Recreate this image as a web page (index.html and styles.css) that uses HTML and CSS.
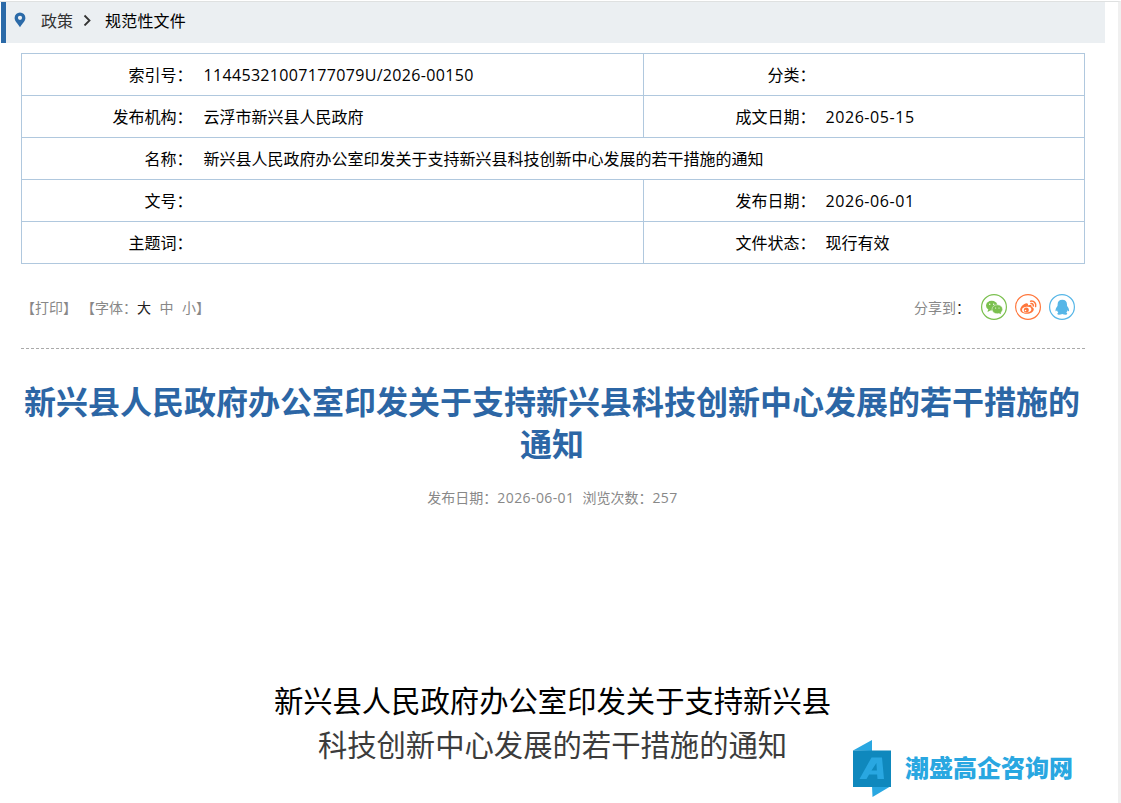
FILE: index.html
```html
<!DOCTYPE html>
<html lang="zh-CN">
<head>
    <meta charset="utf-8">
    <title>新兴县人民政府办公室印发关于支持新兴县科技创新中心发展的若干措施的通知</title>
    <link rel="stylesheet" href="styles.css">
</head>
<body>
    <div class="page">
        <div class="crumb">
            <svg class="pin" viewBox="0 0 12 16" width="12" height="16">
                <path fill="#2b6aa8" fill-rule="evenodd" d="M6 0.5a5.4 5.4 0 0 1 5.4 5.4C11.4 9 8.6 11 6 15.2 3.4 11 .6 9 .6 5.9A5.4 5.4 0 0 1 6 .5zM6 3.7a2.1 2.1 0 1 0 0 4.2 2.1 2.1 0 0 0 0-4.2z"/>
            </svg>
            <a class="crumb-link">政策</a>
            <svg class="arrow" viewBox="0 0 8 12" width="8" height="12">
                <path fill="none" stroke="#333" stroke-width="1.8" d="M1.500 1.500L6.500 6.500l-5 5"/>
            </svg>
            <a class="crumb-now">规范性文件</a>
        </div>

        <table class="info">
            <tr>
                <th class="c1">索引号：</th><td class="c2 serial">11445321007177079U/2026-00150</td>
                <th class="c3">分类：</th><td></td>
            </tr>
            <tr>
                <th>发布机构：</th><td class="c2">云浮市新兴县人民政府</td>
                <th>成文日期：</th><td class="date">2026-05-15</td>
            </tr>
            <tr>
                <th>名称：</th><td class="name" colspan="3">新兴县人民政府办公室印发关于支持新兴县科技创新中心发展的若干措施的通知</td>
            </tr>
            <tr>
                <th>文号：</th><td class="c2"></td>
                <th>发布日期：</th><td class="date">2026-06-01</td>
            </tr>
            <tr>
                <th>主题词：</th><td class="c2"></td>
                <th>文件状态：</th><td>现行有效</td>
            </tr>
        </table>

        <div class="tools">
            <span class="print">【打印】</span>
            <span>【字体：</span><a class="size on">大</a><a class="size">中</a><a>小</a><span>】</span>
            <div class="share">
                <span>分享到<b>：</b></span>
                <svg class="icon" viewBox="0 0 26 26">
                    <circle cx="13" cy="13" r="12.400" fill="#fff" stroke="#7bc04f" stroke-width="1.200"/>
                    <ellipse cx="10.700" cy="11.600" rx="5.700" ry="4.900" fill="#7bc04f"/>
                    <path fill="#7bc04f" d="M7.300 15l-.8 3 3.400-1.700z"/>
                    <ellipse cx="16.300" cy="15.300" rx="5.300" ry="4.500" fill="#7bc04f" stroke="#fff" stroke-width=".5"/>
                    <path fill="#7bc04f" d="M17.500 18.800l2.500 1.500-.5-2.500z"/>
                    <g fill="#fff">
                        <circle cx="8.700" cy="10.200" r=".7"/><circle cx="12.700" cy="10.200" r=".7"/>
                        <circle cx="14.600" cy="14" r=".6"/><circle cx="18" cy="14" r=".6"/>
                    </g>
                </svg>
                <svg class="icon" viewBox="0 0 26 26">
                    <circle cx="13" cy="13" r="12.400" fill="#fff" stroke="#ff763b" stroke-width="1.200"/>
                    <path fill="#ff763b" d="M5.200 15.800c0-2.700 3.700-6.600 6.300-6.600 1.500 0 1.800 1 1.400 2.200 2.400-.9 4.300-.6 3.700 1.500 1.400.4 2.200 1.200 2.200 2.300 0 2.300-3.200 4.600-7 4.600-3.700 0-6.600-1.600-6.600-4z"/>
                    <ellipse cx="11.700" cy="15.700" rx="4.700" ry="2.900" fill="#fff" transform="rotate(-8 11.700 15.700)"/>
                    <circle cx="11.300" cy="15.900" r="2.500" fill="#ff763b"/>
                    <circle cx="10.500" cy="16.500" r=".8" fill="#fff"/>
                    <path fill="none" stroke="#ff763b" stroke-width="1.500" stroke-linecap="round" d="M15.600 7.200c3.500-.6 5.900 2 5 5.400M16 9.600c1.600-.2 2.700 1 2.200 2.500"/>
                </svg>
                <svg class="icon" viewBox="0 0 26 26">
                    <circle cx="13" cy="13" r="12.400" fill="#fff" stroke="#56b6e7" stroke-width="1.200"/>
                    <path fill="#56b6e7" d="M13.300 5.800c-3 0-4.700 2-4.700 4.600 0 1-.1 1.500-.5 2.200-.9 1.300-1.700 2.800-1.600 4.200.1.900.8.600 1.500-.5.200.9.600 1.600 1.300 2.200-1.500.7-1.200 2.200.6 2.200 1.300 0 2.300-.2 3.400-.7 1.100.5 2.100.7 3.400.7 1.800 0 2.100-1.500.6-2.200.7-.6 1.100-1.300 1.300-2.200.7 1.100 1.400 1.400 1.500.5.100-1.400-.7-2.900-1.600-4.200-.4-.7-.5-1.200-.5-2.200 0-2.600-1.700-4.600-4.700-4.600z"/>
                </svg>
            </div>
        </div>

        <h1 class="title">新兴县人民政府办公室印发关于支持新兴县科技创新中心发展的若干措施的通知</h1>
        <div class="meta"><span>发布日期：<i>2026-06-01</i></span><span>浏览次数：<i>257</i></span></div>

        <div class="doc-title">
            <p class="first">新兴县人民政府办公室印发关于支持新兴县</p>
            <p>科技创新中心发展的若干措施的通知</p>
        </div>
    </div>

    <div class="watermark">
        <svg viewBox="0 0 38 57" width="38" height="57">
            <path fill="#29a7e1" d="M0 10.500L19 0v11zM19 46h19L19.500 57z"/>
            <path fill="#0f88bd" d="M0 10.500h38V47H0z"/>
            <path fill="#29a7e1" fill-rule="evenodd" d="M6.500 39L18.500 17.500h10.500L31 39h-6.500l-.4-4.500h-8L13.500 39zM18.500 30.500h5.400l-.5-7.500z"/>
        </svg>
        <span>潮盛高企咨询网</span>
    </div>
</body>
</html>
```
FILE: styles.css
```css
* {
    box-sizing: border-box;
}
body {
    margin: 0;
    height: 803px;
    overflow: hidden;
    background: #fff;
    border-top: 1px solid #fff;
    font-family: "Noto Sans CJK SC", sans-serif;
    font-size: 16px;
    color: #000;
}
.page {
    height: 802px;
    padding: 0 13px 0 1px;
    border-top: 1px solid #dfe1e1;
    border-right: 3px solid #f0f0f0;
}
.crumb {
    display: flex;
    align-items: center;
    height: 41px;
    padding: 0 0 5px 8px;
    background: #ebeff2;
    border-left: 5px solid #2b6aa8;
}
.crumb-link {
    margin: 0 10px 0 15px;
    color: #333;
}
.crumb-now {
    margin-left: 14px;
    letter-spacing: 0.2px;
}

/* info table */
.info {
    width: 1064px;
    margin: 10px 0 0 20px;
    border-collapse: collapse;
    table-layout: fixed;
    border: 1px solid #b0c8de;
}
.info th,
.info td {
    height: 42px;
    padding: 0 0 2px;
    line-height: 24px;
    text-align: left;
    font-weight: normal;
    border-bottom: 1px solid #b0c8de;
}
.info th {
    text-align: right;
    padding-right: 10px;
}
.c1 {
    width: 181px;
}
.info .c2 {
    width: 441px;
    padding-left: 1px;
    border-right: 1px solid #b0c8de;
}
.info .name {
    padding-left: 1px;
}
.c3 {
    width: 182px;
}
.info .serial,
.info .date {
    padding-bottom: 0;
    font-family: "Open Sans", sans-serif;
    letter-spacing: 0.33px;
}
.info .date {
    letter-spacing: 0.57px;
}

.tools {
    display: flex;
    align-items: center;
    height: 85px;
    margin: 0 20px;
    padding-top: 2px;
    border-bottom: 1px dashed #aaa;
    font-size: 14px;
    color: #888;
}
.print {
    margin-right: 4px;
}
.size {
    margin-right: 8.500px;
}
.on {
    color: #222;
}
.share {
    display: flex;
    align-items: center;
    gap: 8px;
    margin-left: auto;
    padding-right: 10px;
}
.share span {
    margin-right: 3px;
}
.share b {
    font-weight: normal;
    color: #222;
}
.icon {
    width: 26px;
    height: 26px;
}

/* article */
.title {
    margin: 30px 22px 0 20px;
    font-size: 32px;
    line-height: 42px;
    text-align: center;
    color: #2c66a5;
}
.meta {
    display: flex;
    justify-content: center;
    gap: 8px;
    margin-top: 23px;
    padding-right: 1px;
    font-size: 14px;
    line-height: 22px;
    color: #888;
}
.meta i {
    font-family: "Open Sans", sans-serif;
    font-style: normal;
    letter-spacing: 0.4px;
}
.doc-title {
    margin-top: 168px;
    padding-right: 1px;
    font-size: 29.33px;
    line-height: 44px;
    text-align: center;
    color: #3c3c3c;
}
.doc-title p {
    margin: 0;
}
.doc-title .first {
    color: #000;
}

/* site mark over the page corner */
.watermark {
    position: absolute;
    left: 853px;
    top: 740px;
    display: flex;
    align-items: center;
    gap: 14px;
    font-size: 24px;
    font-weight: 900;
    color: #29a7e1;
}
.watermark span {
    padding-bottom: 4px;
    font-family: "Liberation Serif", "Noto Sans CJK SC", serif;
}
```
